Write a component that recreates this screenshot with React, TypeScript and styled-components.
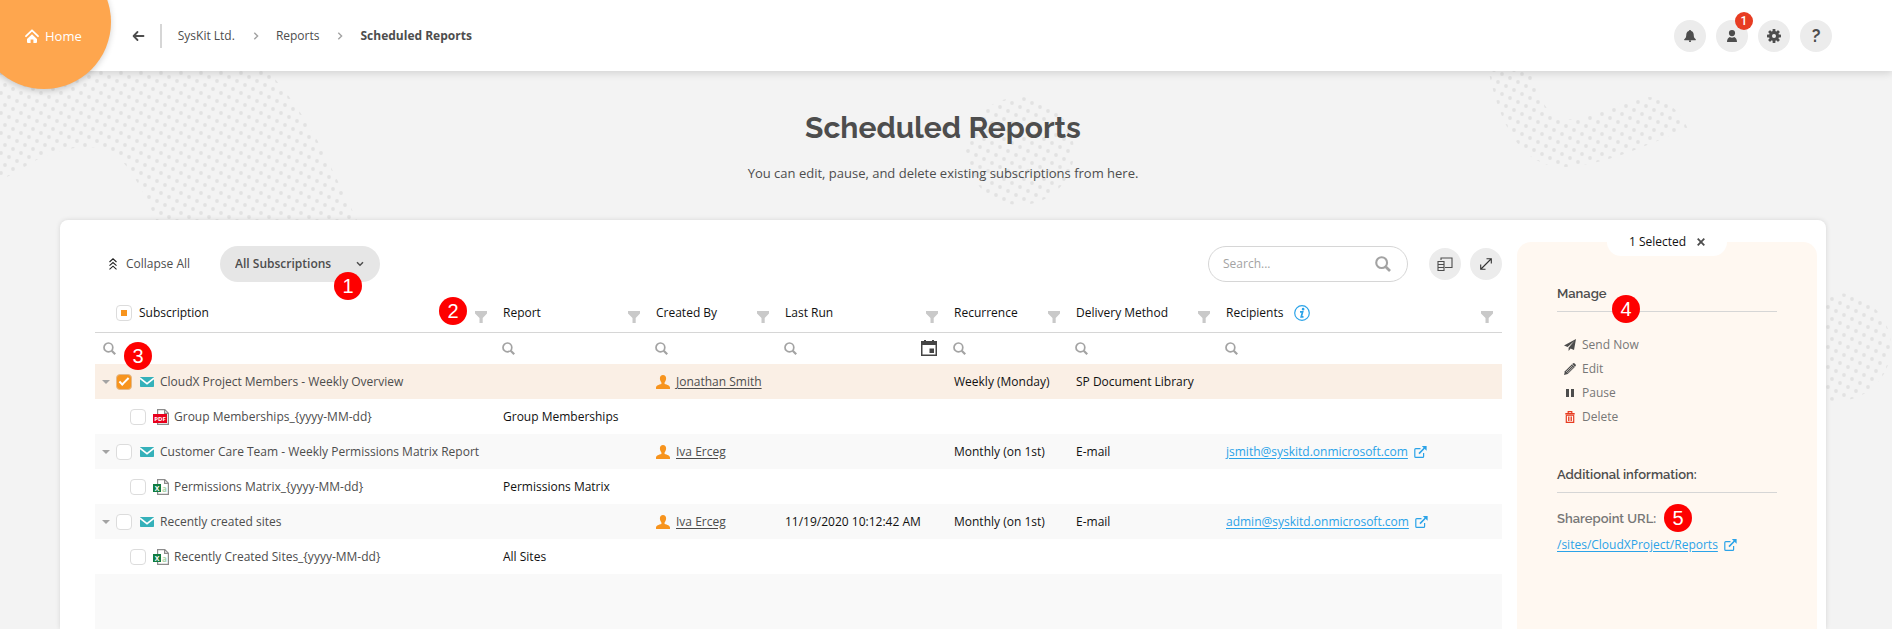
import React, { useEffect, useRef } from "react";
import styled, { createGlobalStyle, css } from "styled-components";

const color = {
  page: "#f3f3f3",
  ink: "#4d4d4d",
  muted: "#777777",
  line: "#d6d6d6",
  soft: "#ececec",
  icon: "#a3a3a3",
  orange: "#f7941e",
  teal: "#35b1ba",
  blue: "#2ba3e8",
  red: "#e73c22",
  stripe: "#f9f9f9",
  selected: "#faefe5",
  panel: "#fff8f1",
};

const bodyFont = `"Segoe UI", "Open Sans", "Noto Sans", sans-serif`;
const headFont = `Raleway, Inter, "Open Sans", sans-serif`;

const GlobalStyle = createGlobalStyle`
  *, *::before, *::after { box-sizing: border-box; }
  body {
    margin: 0;
    background: ${color.page};
    color: ${color.ink};
    font-family: ${bodyFont};
    font-size: 12px;
    line-height: 20px;
  }
  button, input, select { font: inherit; color: inherit; }
  svg { display: block; flex: none; }
`;

const plainButton = css`
  margin: 0;
  padding: 0;
  border: 0;
  background: none;
  cursor: pointer;
`;

/* ---------- page ---------- */

const Page = styled.div`
  position: relative;
  display: flex;
  flex-direction: column;
  min-height: 100vh;
  overflow: hidden;
`;

const Backdrop = styled.svg<{ $top: number; $left?: string; $right?: number }>`
  position: absolute;
  top: ${(p) => p.$top}px;
  ${(p) => (p.$left !== undefined ? `left: ${p.$left};` : "")}
  ${(p) => (p.$right !== undefined ? `right: ${p.$right}px;` : "")}
  pointer-events: none;
`;

const Header = styled.header`
  position: relative;
  z-index: 2;
  display: flex;
  align-items: center;
  justify-content: space-between;
  height: 71px;
  padding: 0 60px 0 25px;
  background: #fff;
  box-shadow: 0 2px 8px rgba(0, 0, 0, 0.14);
`;

const HeaderGroup = styled.div`
  display: flex;
  align-items: center;
`;

const HomeLink = styled.a`
  display: flex;
  align-items: center;
  gap: 6px;
  margin-right: 50px;
  color: #fff;
  font-size: 13px;
  text-decoration: none;

  &::before {
    content: "";
    position: absolute;
    top: -45px;
    left: -23px;
    width: 134px;
    height: 134px;
    border-radius: 50%;
    background: #fea64e;
    box-shadow: 0 2px 6px rgba(0, 0, 0, 0.18);
  }

  > * { position: relative; }
`;

const BackButton = styled.button`
  ${plainButton}
  padding-right: 15px;
  border-right: 2px solid ${color.line};
  height: 24px;
`;

const Crumbs = styled.ol`
  display: flex;
  align-items: center;
  gap: 17px;
  margin: 0 0 0 16px;
  padding: 0;
  list-style: none;
`;

const Crumb = styled.li`
  display: flex;
  align-items: center;
  gap: 18px;
`;

const CrumbLink = styled.a`
  color: ${color.ink};
  text-decoration: none;
`;

const CrumbCurrent = styled.span`
  font-weight: 700;
`;

const HeaderActions = styled.div`
  display: flex;
  gap: 10px;
`;

const RoundButton = styled.button`
  ${plainButton}
  position: relative;
  display: grid;
  place-items: center;
  width: 32px;
  height: 32px;
  border-radius: 50%;
  background: ${color.soft};
`;

const QuestionMark = styled.span`
  font-family: ${headFont};
  font-size: 18px;
  font-weight: 700;
`;

const CountBadge = styled.span`
  position: absolute;
  top: -8px;
  right: -5px;
  width: 18px;
  height: 18px;
  border-radius: 50%;
  background: ${color.red};
  color: #fff;
  font-family: Roboto, ${bodyFont};
  font-size: 12px;
  font-weight: 500;
  line-height: 18px;
  text-align: center;
`;

const Content = styled.main`
  position: relative;
  z-index: 1;
  flex: 1;
  display: flex;
  flex-direction: column;
  padding: 37px 66px 0 60px;
`;

const Title = styled.h1`
  margin: 0;
  font-family: ${headFont};
  font-size: 30px;
  font-weight: 700;
  line-height: 40px;
  text-align: center;
`;

const Subtitle = styled.p`
  margin: 15px 0 37px;
  font-size: 13px;
  text-align: center;
`;

const Card = styled.section`
  flex: 1;
  display: flex;
  gap: 15px;
  padding: 0 9px 0 35px;
  border-radius: 8px 8px 0 0;
  background: #fff;
  box-shadow: 0 0 5px rgba(0, 0, 0, 0.12);
`;

/* ---------- list area ---------- */

const ListArea = styled.div`
  flex: 1;
  display: flex;
  flex-direction: column;
  min-width: 0;
  padding-top: 26px;
`;

const Toolbar = styled.div`
  display: flex;
  align-items: center;
  justify-content: space-between;
  margin-bottom: 12px;
`;

const ToolbarGroup = styled.div`
  display: flex;
  align-items: center;
`;

const CollapseButton = styled.button`
  ${plainButton}
  display: flex;
  align-items: center;
  gap: 9px;
  margin: 0 30px 0 14px;
`;

const SelectWrap = styled.label`
  position: relative;
  display: flex;
  align-items: center;

  > svg {
    position: absolute;
    right: 16px;
    pointer-events: none;
  }
`;

const Select = styled.select`
  appearance: none;
  width: 160px;
  height: 36px;
  padding: 0 15px;
  border: 0;
  border-radius: 18px;
  background: #e6e6e6;
  font-weight: 600;
`;

const SearchBox = styled.label`
  display: flex;
  align-items: center;
  width: 200px;
  height: 36px;
  margin-right: 21px;
  padding: 0 16px 0 14px;
  border: 1px solid ${color.line};
  border-radius: 18px;
`;

const SearchInput = styled.input`
  flex: 1;
  min-width: 0;
  padding: 0;
  border: 0;
  outline: 0;
  background: none;

  &::placeholder { color: ${color.icon}; }
`;

const RoundPair = styled.div`
  display: flex;
  gap: 9px;
`;

const TableFill = styled.div`
  flex: 1;
  background: ${color.stripe};
`;

const Table = styled.table`
  width: 100%;
  table-layout: fixed;
  border-collapse: collapse;
  background: #fff;
  color: #111;
`;

const Col = styled.col<{ $width?: number }>`
  ${(p) => (p.$width ? `width: ${p.$width}px;` : "")}
`;

const Th = styled.th`
  position: relative;
  height: 38px;
  padding: 0 7px 0 9px;
  border-bottom: 1px solid ${color.line};
  font-weight: 400;
  text-align: left;

  &:last-child { padding-right: 9px; }
`;

const HeadCell = styled.div<{ $indent?: boolean }>`
  display: flex;
  align-items: center;
  gap: 7px;
  padding-left: ${(p) => (p.$indent ? 12 : 0)}px;

  > svg { margin-left: 4px; }
`;

const FilterButton = styled.button`
  ${plainButton}
  margin: 8px 0 0 auto;
`;

const FilterCell = styled.td`
  height: 32px;
  padding: 0 8px;
`;

const FilterBox = styled.label`
  display: flex;
  align-items: center;
  gap: 6px;
`;

const FilterInput = styled(SearchInput)`
  width: 100%;
`;

const Row = styled.tr<{ $tone: "plain" | "stripe" | "selected" }>`
  height: 35px;
  background: ${(p) =>
    p.$tone === "plain" ? "#fff" : p.$tone === "stripe" ? color.stripe : color.selected};
`;

const Td = styled.td`
  position: relative;
  padding: 0 0 0 9px;
  white-space: nowrap;

  &:first-child { padding-left: 7px; }
`;

const NameCell = styled.div<{ $child?: boolean }>`
  display: flex;
  align-items: center;
  gap: ${(p) => (p.$child ? 5 : 6)}px;
  padding-left: ${(p) => (p.$child ? 28 : 0)}px;
  color: ${color.ink};

  > input { margin-right: 2px; }
`;

const Expander = styled.button`
  ${plainButton}
`;

const Inline = styled.span`
  display: flex;
  align-items: center;
  gap: 6px;
`;

const UserLink = styled.a`
  color: ${color.ink};
  text-underline-offset: 2px;
`;

const BlueLink = styled.a`
  color: ${color.blue};
  text-underline-offset: 2px;
`;

const Checkbox = styled.input`
  appearance: none;
  flex: none;
  display: grid;
  place-items: center;
  width: 16px;
  height: 16px;
  margin: 0;
  border: 1px solid #dcdcdc;
  border-radius: 4px;
  background: #fff;

  &:indeterminate::before {
    content: "";
    width: 6px;
    height: 6px;
    background: ${color.orange};
  }

  &:checked {
    border-color: #e3b98a;
    background: ${color.orange};
  }

  &:checked::before {
    content: "";
    width: 10px;
    height: 5px;
    margin-bottom: 3px;
    border: solid #fff;
    border-width: 0 0 2px 2px;
    transform: rotate(-45deg);
  }
`;

/* ---------- side panel ---------- */

const SidePanel = styled.aside`
  position: relative;
  flex: none;
  width: 300px;
  margin-top: 22px;
  padding: 41px 40px 0;
  border-radius: 14px 14px 0 0;
  background: ${color.panel};
`;

const SelectedTab = styled.div`
  position: absolute;
  top: -21px;
  left: 90px;
  right: 90px;
  display: flex;
  align-items: center;
  justify-content: center;
  gap: 11px;
  height: 35px;
  padding-top: 7px;
  border-radius: 0 0 14px 14px;
  background: #fff;
  color: #111;
`;

const CloseButton = styled.button`
  ${plainButton}
`;

const PanelHeading = styled.h2`
  position: relative;
  margin: 0;
  padding-bottom: 6px;
  border-bottom: 1px solid ${color.line};
  font-family: ${headFont};
  font-size: 13px;
  font-weight: 600;
  line-height: 22px;
`;

const ActionList = styled.ul`
  margin: 21px 0 35px;
  padding: 0 0 0 7px;
  list-style: none;
`;

const ActionButton = styled.button`
  ${plainButton}
  display: flex;
  align-items: center;
  gap: 6px;
  height: 24px;
  color: ${color.muted};
`;

const InfoLabel = styled.h3`
  position: relative;
  margin: 16px 0 6px;
  color: ${color.muted};
  font-family: ${headFont};
  font-size: 13px;
  font-weight: 600;
  line-height: 20px;
`;

/* Numbered callout that lies over the control it explains. */
const Marker = styled.span<{ $top: number; $left?: number; $right?: number }>`
  position: absolute;
  z-index: 3;
  top: ${(p) => p.$top}px;
  ${(p) => (p.$left !== undefined ? `left: ${p.$left}px;` : "")}
  ${(p) => (p.$right !== undefined ? `right: ${p.$right}px;` : "")}
  width: 28px;
  height: 28px;
  border-radius: 50%;
  background: #fe0000;
  color: #fff;
  font-family: "Liberation Sans", Arial, sans-serif;
  font-size: 20px;
  font-weight: 400;
  line-height: 28px;
  text-align: center;
`;

/* ---------- icons ---------- */

const HomeIcon = () => (
  <svg width="14" height="14" viewBox="0 0 14 14" fill="none">
    <path d="M1 7.200 7 1.300l6 5.900" stroke="#fff" strokeWidth="1.800" strokeLinecap="round" strokeLinejoin="round" />
    <path d="M7 5.200 12 10V13a1 1 0 0 1-1 1H8.400v-3.600H5.600V14H3a1 1 0 0 1-1-1V10z" fill="#fff" />
  </svg>
);

const ArrowLeft = () => (
  <svg width="13" height="12" viewBox="0 0 13 12" fill="none" stroke={color.ink} strokeWidth="1.800">
    <path d="M5.500 2 1.600 6 5.500 10M1.800 6H11.500" strokeLinecap="round" strokeLinejoin="round" />
  </svg>
);

const ChevronRight = () => (
  <svg width="6" height="8" viewBox="0 0 6 8" fill="none" stroke={color.icon} strokeWidth="1.400">
    <path d="M1.300 .8 4.600 4 1.300 7.200" />
  </svg>
);

const ChevronDown = () => (
  <svg width="8" height="6" viewBox="0 0 8 6" fill="none" stroke={color.ink} strokeWidth="1.500">
    <path d="M1 1.200 4 4.200 7 1.200" />
  </svg>
);

const BellIcon = () => (
  <svg width="12" height="12" viewBox="0 0 12 12" fill={color.ink}>
    <path d="M6 0c.7 0 1.100.4 1.200.9C9 1.400 9.600 3 9.700 4.600c.1 2.300.4 3.300 1.500 4.200.9.600.8 1.500.3 1.500H.5c-.5 0-.6-.9.3-1.500 1.100-.9 1.400-1.900 1.500-4.200C2.400 3 3 1.400 4.800.9 4.900.4 5.300 0 6 0zM4.800 10.500h2.400L6.700 12H5.300z" />
  </svg>
);

const PersonIcon = () => (
  <svg width="10" height="12" viewBox="0 0 10 12" fill={color.ink}>
    <circle cx="5" cy="3.100" r="3.100" />
    <path d="M0 12c0-2.500 1.100-4.300 2.800-4.900 1.300.8 3.100.8 4.400 0C8.900 7.700 10 9.500 10 12z" />
  </svg>
);

const GearIcon = () => (
  <svg width="14" height="14" viewBox="0 0 14 14" fill={color.ink}>
    {[0, 45, 90, 135].map((a) => (
      <rect key={a} x="5.600" y="0" width="2.800" height="14" rx=".6" transform={`rotate(${a} 7 7)`} />
    ))}
    <circle cx="7" cy="7" r="5" />
    <circle cx="7" cy="7" r="2" fill={color.soft} />
  </svg>
);

const CollapseIcon = () => (
  <svg width="8" height="12" viewBox="0 0 8 12" fill="none" stroke="#222" strokeWidth="1.100">
    <path d="M.5 4 4 .8 7.500 4M.5 7.700 4 4.500 7.500 7.700M.5 11.400 4 8.200 7.500 11.400" />
  </svg>
);

const SearchIcon = ({ size = 13 }: { size?: number }) => (
  <svg width={size} height={size} viewBox="0 0 13 13" fill="none" stroke={color.icon}>
    <circle cx="5.400" cy="5.400" r="4.400" strokeWidth="1.700" />
    <path d="M8.700 8.700 12.200 12.200" strokeWidth="2.200" />
  </svg>
);

const ColumnsIcon = () => (
  <svg width="16" height="15" viewBox="0 0 16 15" fill="none" stroke={color.ink} strokeWidth="1.100">
    <path d="M4 3V1h11v9.500H8" />
    <path d="M1 4.500h6v9H1zM1 7.500h6M1 10.500h6" />
  </svg>
);

const ExpandIcon = () => (
  <svg width="12" height="12" viewBox="0 0 12 12" fill="none" stroke="#333" strokeWidth="1.100">
    <path d="M1 11 11 1M6.500.7h4.800v4.800M.7 6.500v4.800h4.800" />
  </svg>
);

const FunnelIcon = () => (
  <svg width="12" height="12" viewBox="0 0 12 12" fill="#c9c9c9">
    <path d="M0 0h12v2.500L7.700 7v5H4.500V7L0 2.500z" />
  </svg>
);

const InfoIcon = () => (
  <svg width="16" height="16" viewBox="0 0 16 16" fill="none" stroke={color.blue}>
    <circle cx="8" cy="8" r="7.300" strokeWidth="1.200" />
    <circle cx="9.100" cy="4.200" r=".7" strokeWidth="1.300" />
    <path d="M6 6.900h2.600L7.200 11.900h2.300" strokeWidth="1.700" />
  </svg>
);

const CalendarIcon = () => (
  <svg width="16" height="16" viewBox="0 0 16 16" fill="#444">
    <path d="M3 0h2v1h6V0h2v1h3v15H0V1h3zM1.500 5v9.500h13V5z" fillRule="evenodd" />
    <rect x="8.500" y="8.500" width="4.500" height="4.500" />
  </svg>
);

const CaretDown = () => (
  <svg width="8" height="4" viewBox="0 0 8 4" fill={color.icon}>
    <path d="M0 0h8L4 4z" />
  </svg>
);

const MailIcon = () => (
  <svg width="14" height="10" viewBox="0 0 14 10">
    <rect width="14" height="10" rx=".8" fill={color.teal} />
    <path d="M0 1.200 7 6.700 14 1.200" fill="none" stroke="#fff" strokeWidth="1.500" />
  </svg>
);

const UserIcon = () => (
  <svg width="14" height="14" viewBox="0 0 14 14" fill={color.orange}>
    <path d="M7 0c2 0 3.100 1.300 3.100 3.300 0 1.700-.6 3.200-1.500 4.100v1.500c2.600.8 5.400 1.600 5.400 3.700V14H0v-1.400c0-2.100 2.800-2.900 5.400-3.700V7.400C4.500 6.500 3.900 5 3.900 3.300 3.900 1.300 5 0 7 0z" />
  </svg>
);

const ExternalIcon = () => (
  <svg width="13" height="12" viewBox="0 0 13 12" fill="none" stroke={color.blue} strokeWidth="1.200">
    <path d="M6.500 2.600H1.800a1 1 0 0 0-1 1v6.800a1 1 0 0 0 1 1h6.800a1 1 0 0 0 1-1V7" />
    <path d="M5 7.600 10.500 2" strokeWidth="1.500" />
    <path d="M7.800 0H12.600V4.800z" fill={color.blue} stroke="none" />
  </svg>
);

const IconText = styled.text`
  font-family: "Open Sans", sans-serif;
  font-weight: 700;
`;

const FilePage = () => (
  <path d="M4.600 5V.6h7.200L15.400 4.200V15.400H4.600V13M11.600.8v3.600h3.600" fill="#fff" stroke="#8c8c8c" strokeWidth="1.200" />
);

const PdfIcon = () => (
  <svg width="16" height="16" viewBox="0 0 16 16">
    <FilePage />
    <rect y="5" width="14" height="9" fill="#e8001c" />
    <IconText x="7" y="12" fontSize="6" fill="#fff" textAnchor="middle">PDF</IconText>
  </svg>
);

const ExcelIcon = () => (
  <svg width="16" height="16" viewBox="0 0 16 16">
    <FilePage />
    <rect y="5" width="8" height="8" fill="#107c41" />
    <IconText x="4" y="11.500" fontSize="7" fill="#fff" textAnchor="middle">X</IconText>
    <IconText x="11.500" y="13" fontSize="8" fill="#a9d3a9" textAnchor="middle">a</IconText>
  </svg>
);

const SendIcon = () => (
  <svg width="12" height="12" viewBox="0 0 12 12" fill={color.ink}>
    <path d="M12 0 10 11 6.600 9.500 4.600 12V8.700L10.300 2 3.600 7.900 0 6.500z" />
  </svg>
);

const PencilIcon = () => (
  <svg width="12" height="12" viewBox="0 0 12 12">
    <path d="M0 12 .9 8.200 8 1.200 10.800 4 3.700 11z" fill={color.ink} />
    <path d="M2 9 8.400 2.700M3.200 10.100 9.600 3.700" stroke={color.panel} strokeWidth=".6" />
    <path d="M8.800.6a1.300 1.300 0 0 1 1.900 0l.7.7a1.300 1.300 0 0 1 0 1.900l-.5.500L8.300 1.100z" fill={color.ink} />
  </svg>
);

const PauseIcon = () => (
  <svg width="12" height="12" viewBox="0 0 12 12" fill={color.ink}>
    <path d="M2 2h3v8H2zM7 2h3v8H7z" />
  </svg>
);

const TrashIcon = () => (
  <svg width="12" height="12" viewBox="0 0 12 12" fill="none" stroke={color.red}>
    <path d="M1.300 2.800h9.400" strokeWidth="1.600" />
    <path d="M4.200 2.200V.6h3.600v1.600M2.300 4.300v7.100h7.400V4.300" strokeWidth="1.200" />
    <path d="M4.500 5.500v4.500M6 5.500v4.500M7.500 5.500v4.500" strokeWidth=".9" />
    <path d="M2 4.300h8" strokeWidth="1" />
  </svg>
);

const CloseIcon = () => (
  <svg width="8" height="8" viewBox="0 0 8 8" fill="none" stroke={color.ink} strokeWidth="1.800">
    <path d="M.7.7 7.300 7.300M7.300.7.700 7.300" />
  </svg>
);

/* Dotted wash behind the page; x and y set where the dot lattice starts. */
const Dots = ({ id, x, y }: { id: string; x: number; y: number }) => (
  <defs>
    <pattern id={id} x={x} y={y} width="20" height="20" patternUnits="userSpaceOnUse">
      {[[2, 2], [10, 6], [18, 10], [6, 14], [14, 18]].map(([cx, cy]) => (
        <circle key={cx} cx={cx} cy={cy} r="1.900" fill="#e2e2e2" />
      ))}
    </pattern>
  </defs>
);

const Backdrops = () => (
  <>
    <Backdrop $top={0} $left="0" width="360" height="230" aria-hidden="true">
      <Dots id="dots-a" x={11} y={7} />
      <path d="M0 60H258C285 88 303 115 320 145L362 230H160C148 200 134 172 118 157 98 141 70 146 40 158L0 181Z" fill="url(#dots-a)" />
    </Backdrop>
    <Backdrop $top={95} $left="calc(50% + 18px)" width="112" height="112" aria-hidden="true">
      <Dots id="dots-b" x={2} y={14} />
      <circle cx="56" cy="56" r="54" fill="url(#dots-b)" />
    </Backdrop>
    <Backdrop $top={60} $right={200} width="212" height="112" aria-hidden="true">
      <Dots id="dots-c" x={8} y={16} />
      <path d="M8 8C18 60 40 108 84 107 130 105 170 82 208 69 200 50 184 36 166 37 135 42 100 62 80 60 62 50 58 30 50 8Z" fill="url(#dots-c)" />
    </Backdrop>
    <Backdrop $top={290} $right={0} width="110" height="112" aria-hidden="true">
      <Dots id="dots-d" x={0} y={3} />
      <circle cx="55" cy="57" r="54" fill="url(#dots-d)" />
    </Backdrop>
  </>
);

/* ---------- data ---------- */

type Subscription = {
  name: string;
  owner: string;
  lastRun?: string;
  recurrence: string;
  delivery: string;
  recipient?: string;
  selected?: boolean;
  file: string;
  fileType: "pdf" | "excel";
  report: string;
};

const subscriptions: Subscription[] = [
  {
    name: "CloudX Project Members - Weekly Overview",
    owner: "Jonathan Smith",
    recurrence: "Weekly (Monday)",
    delivery: "SP Document Library",
    selected: true,
    file: "Group Memberships_{yyyy-MM-dd}",
    fileType: "pdf",
    report: "Group Memberships",
  },
  {
    name: "Customer Care Team - Weekly Permissions Matrix Report",
    owner: "Iva Erceg",
    recurrence: "Monthly (on 1st)",
    delivery: "E-mail",
    recipient: "jsmith@syskitd.onmicrosoft.com",
    file: "Permissions Matrix_{yyyy-MM-dd}",
    fileType: "excel",
    report: "Permissions Matrix",
  },
  {
    name: "Recently created sites",
    owner: "Iva Erceg",
    lastRun: "11/19/2020 10:12:42 AM",
    recurrence: "Monthly (on 1st)",
    delivery: "E-mail",
    recipient: "admin@syskitd.onmicrosoft.com",
    file: "Recently Created Sites_{yyyy-MM-dd}",
    fileType: "excel",
    report: "All Sites",
  },
];

const columns: { label: string; width?: number }[] = [
  { label: "Subscription" },
  { label: "Report", width: 153 },
  { label: "Created By", width: 129 },
  { label: "Last Run", width: 169 },
  { label: "Recurrence", width: 122 },
  { label: "Delivery Method", width: 150 },
  { label: "Recipients", width: 285 },
];

const actions = [
  { label: "Send Now", Icon: SendIcon },
  { label: "Edit", Icon: PencilIcon },
  { label: "Pause", Icon: PauseIcon },
  { label: "Delete", Icon: TrashIcon },
];

/* ---------- composition ---------- */

const SelectAll = () => {
  const ref = useRef<HTMLInputElement>(null);
  useEffect(() => {
    if (ref.current) ref.current.indeterminate = true;
  }, []);
  return <Checkbox ref={ref} type="checkbox" aria-label="Select all subscriptions" />;
};

const SubscriptionRows = ({ item, index }: { item: Subscription; index: number }) => (
  <>
    <Row $tone={item.selected ? "selected" : "stripe"}>
      <Td>
        <NameCell>
          <Expander aria-label={`Collapse ${item.name}`}><CaretDown /></Expander>
          <Checkbox type="checkbox" defaultChecked={item.selected} aria-label={item.name} />
          <MailIcon />
          {item.name}
        </NameCell>
        {index === 0 && <Marker $top={-22} $left={29}>3</Marker>}
      </Td>
      <Td />
      <Td>
        <Inline>
          <UserIcon />
          <UserLink href="#user">{item.owner}</UserLink>
        </Inline>
      </Td>
      <Td>{item.lastRun}</Td>
      <Td>{item.recurrence}</Td>
      <Td>{item.delivery}</Td>
      <Td>
        {item.recipient && (
          <Inline>
            <BlueLink href={`mailto:${item.recipient}`}>{item.recipient}</BlueLink>
            <ExternalIcon />
          </Inline>
        )}
      </Td>
    </Row>
    <Row $tone="plain">
      <Td>
        <NameCell $child>
          <Checkbox type="checkbox" aria-label={item.file} />
          {item.fileType === "pdf" ? <PdfIcon /> : <ExcelIcon />}
          {item.file}
        </NameCell>
      </Td>
      <Td>{item.report}</Td>
      <Td colSpan={5} />
    </Row>
  </>
);

export default function App() {
  return (
    <>
      <GlobalStyle />
      <Page>
        <Backdrops />
        <Header>
          <HeaderGroup>
            <HomeLink href="#home">
              <HomeIcon />
              <span>Home</span>
            </HomeLink>
            <BackButton aria-label="Back"><ArrowLeft /></BackButton>
            <nav aria-label="Breadcrumb">
              <Crumbs>
                <Crumb><CrumbLink href="#org">SysKit Ltd.</CrumbLink><ChevronRight /></Crumb>
                <Crumb><CrumbLink href="#reports">Reports</CrumbLink><ChevronRight /></Crumb>
                <Crumb><CrumbCurrent aria-current="page">Scheduled Reports</CrumbCurrent></Crumb>
              </Crumbs>
            </nav>
          </HeaderGroup>
          <HeaderActions>
            <RoundButton aria-label="Notifications"><BellIcon /></RoundButton>
            <RoundButton aria-label="Account"><PersonIcon /><CountBadge>1</CountBadge></RoundButton>
            <RoundButton aria-label="Settings"><GearIcon /></RoundButton>
            <RoundButton aria-label="Help"><QuestionMark>?</QuestionMark></RoundButton>
          </HeaderActions>
        </Header>

        <Content>
          <Title>Scheduled Reports</Title>
          <Subtitle>You can edit, pause, and delete existing subscriptions from here.</Subtitle>

          <Card>
            <ListArea>
              <Toolbar>
                <ToolbarGroup>
                  <CollapseButton><CollapseIcon />Collapse All</CollapseButton>
                  <SelectWrap>
                    <Select aria-label="Subscription filter">
                      <option>All Subscriptions</option>
                    </Select>
                    <ChevronDown />
                    <Marker $top={26} $left={114}>1</Marker>
                  </SelectWrap>
                </ToolbarGroup>
                <ToolbarGroup>
                  <SearchBox>
                    <SearchInput type="text" placeholder="Search..." aria-label="Search" />
                    <SearchIcon size={16} />
                  </SearchBox>
                  <RoundPair>
                    <RoundButton aria-label="Choose columns"><ColumnsIcon /></RoundButton>
                    <RoundButton aria-label="Full screen"><ExpandIcon /></RoundButton>
                  </RoundPair>
                </ToolbarGroup>
              </Toolbar>

              <Table>
                <colgroup>
                  {columns.map((c) => <Col key={c.label} $width={c.width} />)}
                </colgroup>
                <thead>
                  <tr>
                    {columns.map((c, i) => (
                      <Th key={c.label} scope="col">
                        <HeadCell $indent={i === 0}>
                          {i === 0 && <SelectAll />}
                          {c.label}
                          {c.label === "Recipients" && <InfoIcon />}
                          <FilterButton aria-label={`Filter ${c.label}`}><FunnelIcon /></FilterButton>
                        </HeadCell>
                        {i === 0 && <Marker $top={3} $right={27}>2</Marker>}
                      </Th>
                    ))}
                  </tr>
                  <tr>
                    {columns.map((c) => (
                      <FilterCell key={c.label}>
                        <FilterBox>
                          <SearchIcon />
                          <FilterInput type="text" aria-label={`Search ${c.label}`} />
                          {c.label === "Last Run" && <CalendarIcon />}
                        </FilterBox>
                      </FilterCell>
                    ))}
                  </tr>
                </thead>
                <tbody>
                  {subscriptions.map((s, i) => <SubscriptionRows key={s.name} item={s} index={i} />)}
                </tbody>
              </Table>
              <TableFill />
            </ListArea>

            <SidePanel>
              <SelectedTab>
                1 Selected
                <CloseButton aria-label="Clear selection"><CloseIcon /></CloseButton>
              </SelectedTab>
              <PanelHeading>
                Manage
                <Marker $top={12} $left={55}>4</Marker>
              </PanelHeading>
              <ActionList>
                {actions.map(({ label, Icon }) => (
                  <li key={label}>
                    <ActionButton><Icon />{label}</ActionButton>
                  </li>
                ))}
              </ActionList>
              <PanelHeading>Additional information:</PanelHeading>
              <InfoLabel>
                Sharepoint URL:
                <Marker $top={-5} $left={107}>5</Marker>
              </InfoLabel>
              <Inline>
                <BlueLink href="#site">/sites/CloudXProject/Reports</BlueLink>
                <ExternalIcon />
              </Inline>
            </SidePanel>
          </Card>
        </Content>
      </Page>
    </>
  );
}
